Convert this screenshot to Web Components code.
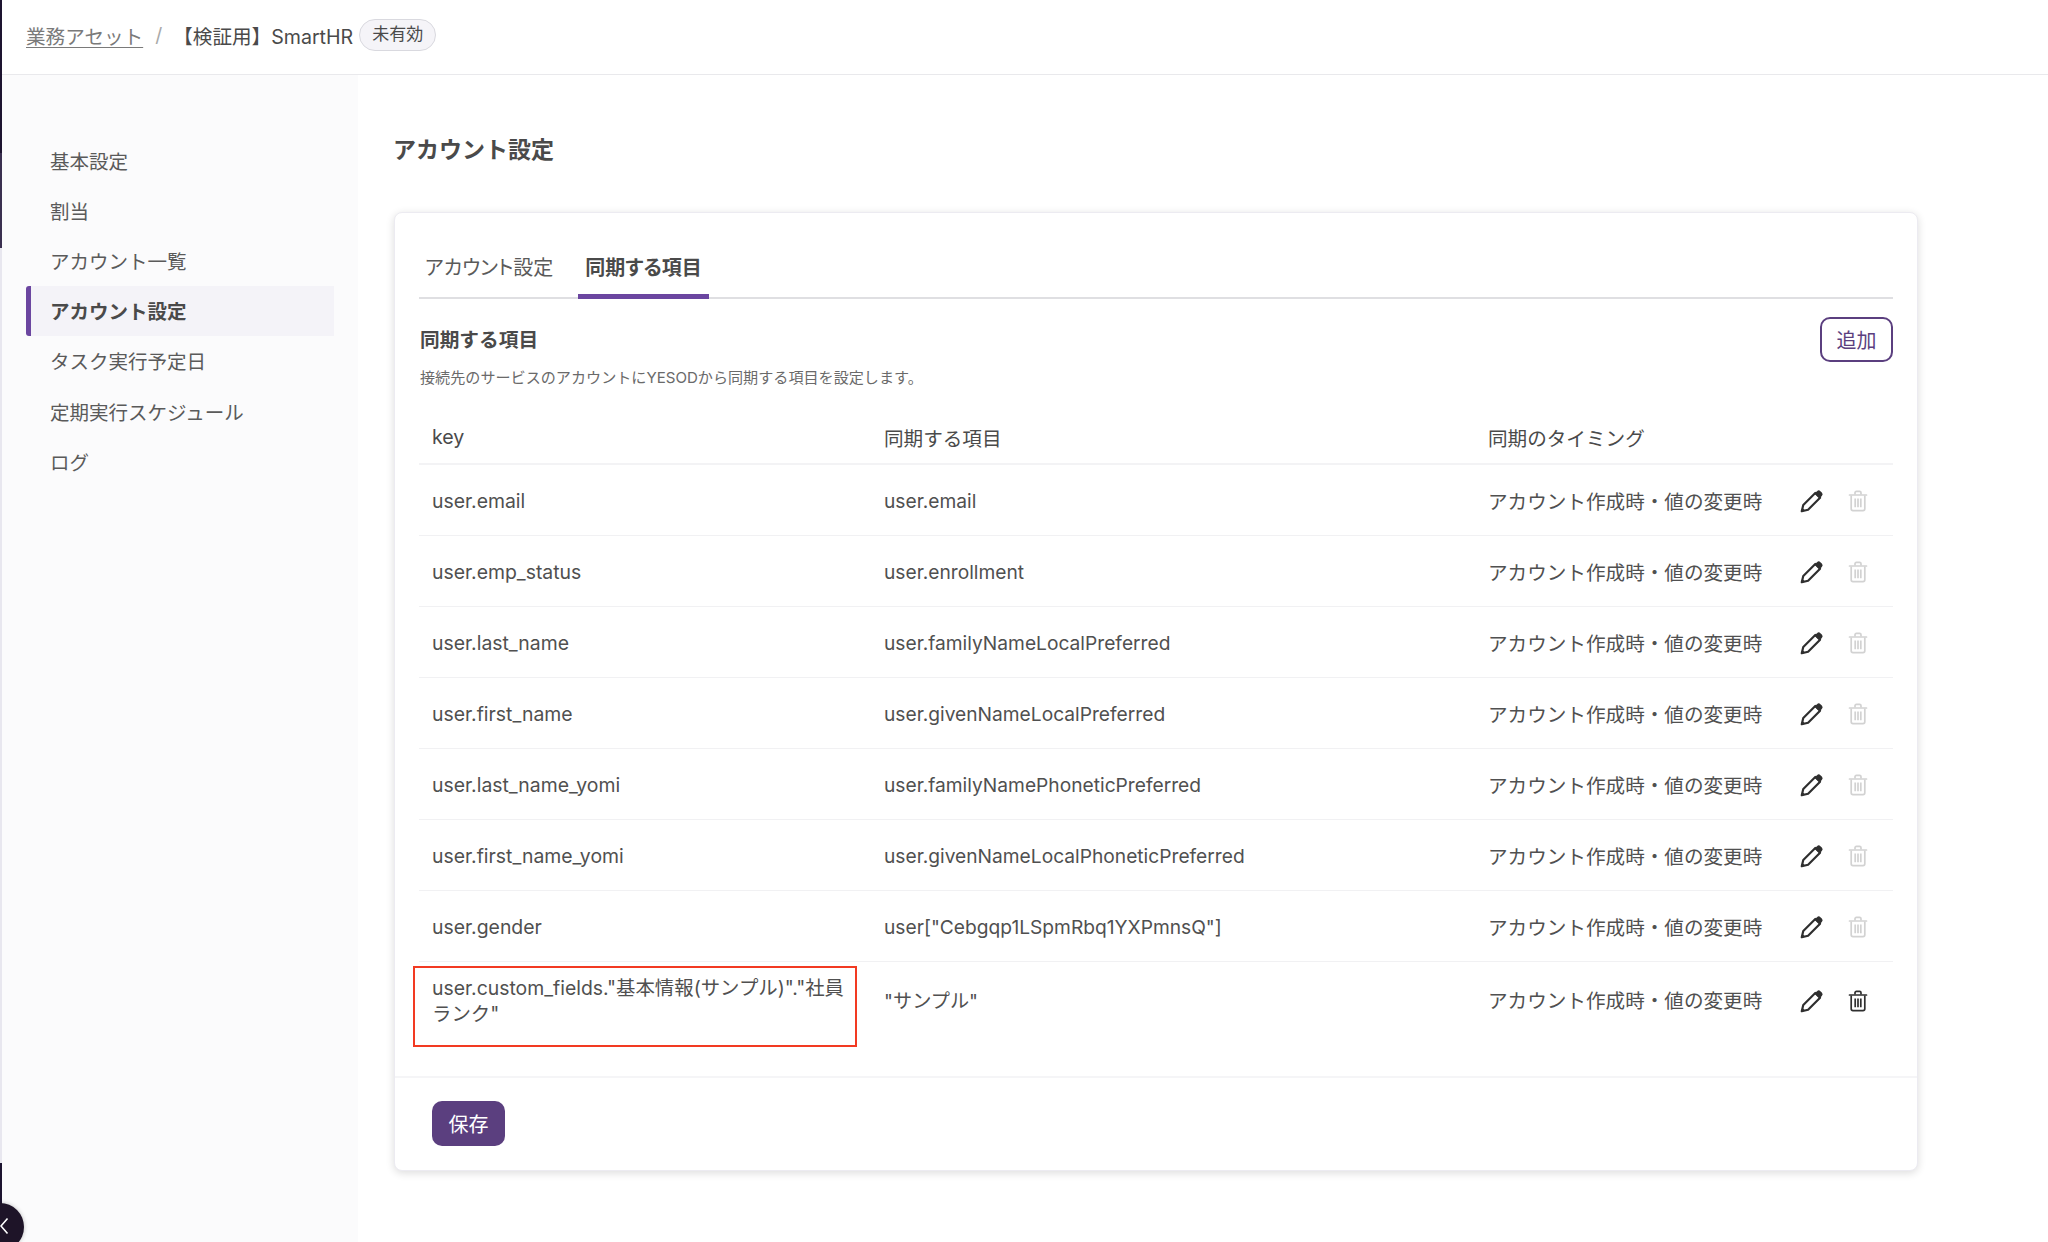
<!DOCTYPE html>
<html lang="ja">
<head>
<meta charset="utf-8">
<title>アカウント設定</title>
<style>
  html, body { margin: 0; height: 100%; background: #fff; overflow: hidden; }
  body {
    font-family: Inter, "Noto Sans CJK JP", sans-serif;
    color: #4a4a4a;
    font-size: 20px;
  }
</style>
</head>
<body>

<app-shell>
  <top-bar slot="top" parent="業務アセット" current="【検証用】SmartHR" status="未有効"></top-bar>
  <side-nav slot="side">
    <nav-item>基本設定</nav-item>
    <nav-item>割当</nav-item>
    <nav-item>アカウント一覧</nav-item>
    <nav-item active>アカウント設定</nav-item>
    <nav-item>タスク実行予定日</nav-item>
    <nav-item>定期実行スケジュール</nav-item>
    <nav-item>ログ</nav-item>
  </side-nav>
  <sync-page heading="アカウント設定">
    <tab-bar>
      <tab-item>アカウント設定</tab-item>
      <tab-item active>同期する項目</tab-item>
    </tab-bar>
    <sync-section heading="同期する項目" note="接続先のサービスのアカウントにYESODから同期する項目を設定します。">
      <sync-head></sync-head>
      <sync-row><span slot="key">user.email</span><span slot="item">user.email</span></sync-row>
      <sync-row><span slot="key">user.emp_status</span><span slot="item">user.enrollment</span></sync-row>
      <sync-row><span slot="key">user.last_name</span><span slot="item">user.familyNameLocalPreferred</span></sync-row>
      <sync-row><span slot="key">user.first_name</span><span slot="item">user.givenNameLocalPreferred</span></sync-row>
      <sync-row><span slot="key">user.last_name_yomi</span><span slot="item">user.familyNamePhoneticPreferred</span></sync-row>
      <sync-row><span slot="key">user.first_name_yomi</span><span slot="item">user.givenNameLocalPhoneticPreferred</span></sync-row>
      <sync-row><span slot="key">user.gender</span><span slot="item">user["Cebgqp1LSpmRbq1YXPmnsQ"]</span></sync-row>
      <sync-row tall removable><span slot="key">user.custom_fields."基本情報(サンプル)"."社員ランク"</span><span slot="item">"サンプル"</span></sync-row>
    </sync-section>
  </sync-page>
</app-shell>

<script>
const PENCIL = `<svg width="24" height="24" viewBox="1 1 22 22" fill="none">
  <path d="M2.600 21.400l1.400-5.800L15 4.600l4.400 4.400L8.400 20z" stroke="currentColor" stroke-width="2" stroke-linejoin="round"/>
  <path d="M2.200 21.800l.9-3.700 2.800 2.800z" fill="currentColor"/>
  <path d="M14.400 5.200l2.200-2.200a2.200 2.200 0 0 1 3.100 0l1.300 1.300a2.200 2.200 0 0 1 0 3.100L18.800 9.600z" fill="currentColor"/>
</svg>`;
const TRASH = `<svg width="20" height="22" viewBox="0 0 20 22" fill="none" stroke="currentColor" stroke-width="1.7">
  <path d="M1.500 5h17" stroke-linecap="round"/>
  <path d="M7 4.600V2.800c0-.8.6-1.400 1.400-1.400h3.200c.8 0 1.400.6 1.400 1.400v1.800"/>
  <path d="M3.200 5.400v13.400c0 1 .8 1.800 1.800 1.800h10c1 0 1.800-.8 1.800-1.800V5.400"/>
  <path d="M7.200 8.600v8.600M10 8.600v8.600M12.800 8.600v8.600"/>
</svg>`;

class AppShell extends HTMLElement {
  constructor() {
    super();
    this.attachShadow({mode: 'open'}).innerHTML = `
      <style>
        :host { display: flex; height: 1242px; position: relative; overflow: hidden; }
        .edge {
          width: 2px; flex: none;
          background: linear-gradient(#1d1430 0 153px, #3a3050 153px 248px, #e8e7ef 248px 1163px, #1d1430 1163px);
        }
        .body { flex: 1; min-width: 0; display: flex; flex-direction: column; }
        .below { flex: 1; min-height: 0; display: flex; }
        .toggle {
          position: absolute; left: -24px; top: 1203px;
          width: 48px; height: 48px; border-radius: 50%;
          background: #1e1428;
          box-shadow: 0 0 4px rgba(0,0,0,.25);
        }
        .toggle svg { position: absolute; left: 24px; top: 13px; }
      </style>
      <div class="edge"></div>
      <div class="body">
        <slot name="top"></slot>
        <div class="below">
          <slot name="side"></slot>
          <slot></slot>
        </div>
      </div>
      <div class="toggle">
        <svg width="10" height="20" viewBox="0 0 10 20" fill="none" stroke="#fff" stroke-width="1.6"><path d="M7.500 2.500L1 10l6.500 7.500"/></svg>
      </div>`;
  }
}

class TopBar extends HTMLElement {
  constructor() {
    super();
    this.attachShadow({mode: 'open'}).innerHTML = `
      <style>
        :host {
          display: flex; align-items: center; flex: none;
          height: 75px; box-sizing: border-box;
          padding: 0 0 4px 24px;
          border-bottom: 1px solid #e9e9ec;
          background: #fff;
          font-size: 19.6px;
        }
        a { color: #7a7a7a; text-decoration: underline; text-underline-offset: 3px; text-decoration-thickness: 1px; }
        .sep { color: #a9a9a9; margin: 0 11px 0 12px; }
        .cur { color: #4a4a4a; }
        .badge {
          margin-left: 6px; padding: 0 12px; height: 32px; line-height: 29px;
          box-sizing: border-box;
          border: 1px solid #d9d9df; border-radius: 16px;
          background: #f5f4f8; font-size: 17px; color: #4a4a4a;
        }
      </style>
      <a href="#">${this.getAttribute('parent')}</a>
      <span class="sep">/</span>
      <span class="cur">${this.getAttribute('current')}</span>
      <span class="badge">${this.getAttribute('status')}</span>`;
  }
}

class SideNav extends HTMLElement {
  constructor() {
    super();
    this.attachShadow({mode: 'open'}).innerHTML = `
      <style>
        :host {
          display: flex; flex-direction: column; flex: none;
          width: 356px; box-sizing: border-box;
          padding: 60px 24px 0 24px;
          background: #fbfbfc;
          font-size: 19.5px;
        }
      </style>
      <slot></slot>`;
  }
}

class NavItem extends HTMLElement {
  constructor() {
    super();
    this.attachShadow({mode: 'open'}).innerHTML = `
      <style>
        :host {
          display: flex; align-items: center;
          height: 50.2px; box-sizing: border-box;
          padding-left: 24px; color: #5a5a5a;
        }
        :host([active]) {
          background: #f4f3f8;
          border-left: 5px solid #6b46a0;
          border-radius: 3px 0 0 3px;
          padding-left: 19px;
          font-weight: 700; color: #4a4a4a;
        }
      </style>
      <slot></slot>`;
  }
}

class SyncPage extends HTMLElement {
  constructor() {
    super();
    this.attachShadow({mode: 'open'}).innerHTML = `
      <style>
        :host { display: block; flex: 1; min-width: 0; padding: 0 130px 0 36px; }
        h1 { margin: 0 0 0 -1px; height: 137px; box-sizing: border-box; padding-top: 58px; font-size: 23px; line-height: 34px; font-weight: 700; color: #4a4a4a; }
        .card {
          height: 959px; box-sizing: border-box;
          padding: 24px 24px 0 24px;
          border: 1px solid #ecebf1; border-radius: 8px;
          background: #fff;
          box-shadow: 0 2px 8px rgba(0,0,0,.14);
        }
      </style>
      <h1>${this.getAttribute('heading')}</h1>
      <div class="card"><slot></slot></div>`;
  }
}

class TabBar extends HTMLElement {
  constructor() {
    super();
    this.attachShadow({mode: 'open'}).innerHTML = `
      <style>
        :host { display: flex; height: 62px; box-sizing: border-box; border-bottom: 2px solid #dfdfe2; }
      </style>
      <slot></slot>`;
  }
}

class TabItem extends HTMLElement {
  constructor() {
    super();
    this.attachShadow({mode: 'open'}).innerHTML = `
      <style>
        :host {
          display: flex; align-items: center; height: 60px;
          padding: 0 8px 2px 6px; margin-right: 17px; box-sizing: border-box;
          color: #5a5a5a; font-feature-settings: "palt";
        }
        :host([active]) {
          font-weight: 700; color: #4a4a4a;
          padding: 2px 7px 0 7px; height: 62px;
          border-bottom: 5px solid #6b46a0;
          border-radius: 3px 3px 0 0;
        }
      </style>
      <slot></slot>`;
  }
}

class SyncSection extends HTMLElement {
  constructor() {
    super();
    this.attachShadow({mode: 'open'}).innerHTML = `
      <style>
        :host { display: block; }
        .head { display: flex; justify-content: space-between; align-items: flex-start; height: 114px; box-sizing: border-box; padding-top: 18px; }
        h2 { margin: 9px 0 0 1px; font-size: 19.7px; line-height: 28px; font-weight: 700; color: #4a4a4a; }
        p { margin: 14px 0 0 1px; font-size: 15.1px; line-height: 20px; color: #6a6a6a; }
        button {
          font: inherit; box-sizing: border-box; width: 73px; height: 45px;
          border-radius: 10px; cursor: pointer;
          background: #fff; border: 2px solid #5b3f7f; color: #5b3f7f;
        }
        .foot { margin: 0 -24px; padding: 23px 0 0 37px; border-top: 2px solid #f5f5f7; }
        button.save { background: #5b3f7f; border: 0; color: #fff; }
      </style>
      <div class="head">
        <div>
          <h2>${this.getAttribute('heading')}</h2>
          <p>${this.getAttribute('note')}</p>
        </div>
        <button>追加</button>
      </div>
      <slot></slot>
      <div class="foot"><button class="save">保存</button></div>`;
  }
}

const COLS = 'display: grid; grid-template-columns: 452px 604px 1fr;';

class SyncHead extends HTMLElement {
  constructor() {
    super();
    this.attachShadow({mode: 'open'}).innerHTML = `
      <style>
        :host { ${COLS} align-items: center; height: 52px; box-sizing: border-box; padding: 0 0 2px 13px; border-bottom: 2px solid #f3f3f5; color: #4a4a4a; font-size: 19.6px; }
        div:first-child { padding-top: 2px; }
      </style>
      <div>key</div><div>同期する項目</div><div>同期のタイミング</div>`;
  }
}

class SyncRow extends HTMLElement {
  constructor() {
    super();
    const removable = this.hasAttribute('removable');
    this.attachShadow({mode: 'open'}).innerHTML = `
      <style>
        :host {
          ${COLS} align-items: center; position: relative;
          height: 71px; box-sizing: border-box;
          padding-left: 13px;
          border-bottom: 1px solid #f1f1f3;
          color: #505050; font-size: 19.2px;
        }
        :host([tall]) { height: 114px; border-bottom: 0; align-items: start; padding-top: 13px; }
        .key { padding: 2px 27px 0 0; line-height: 26px; font-size: 19.4px; }
        .item { padding-top: 2px; }
        :host([tall]) .key { padding-top: 0; }
        :host([tall]) .item { padding-top: 11px; }
        :host([tall]) .timing { padding-top: 10px; }
        .timing { display: flex; align-items: center; font-size: 19.6px; }
        .acts { display: flex; align-items: center; margin-left: 38px; }
        .edit { color: #2f2f2f; width: 24px; height: 24px; margin-top: 2px; }
        .del { color: ${removable ? '#2f2f2f' : '#d2d2d2'}; width: 20px; height: 22px; margin-left: 24px; margin-top: 2px; }
        .mark { display: none; position: absolute; left: -6px; top: 4px; width: 444px; height: 81px; box-sizing: border-box; border: 2px solid #f23a22; pointer-events: none; }
        :host([tall]) .mark { display: block; }
      </style>
      <div class="key"><slot name="key"></slot></div>
      <div class="item"><slot name="item"></slot></div>
      <div class="timing"><span>アカウント作成時・値の変更時</span>
        <div class="acts"><div class="edit">${PENCIL}</div><div class="del">${TRASH}</div></div>
      </div>
      <div class="mark"></div>`;
  }
}

customElements.define('app-shell', AppShell);
customElements.define('top-bar', TopBar);
customElements.define('side-nav', SideNav);
customElements.define('nav-item', NavItem);
customElements.define('sync-page', SyncPage);
customElements.define('tab-bar', TabBar);
customElements.define('tab-item', TabItem);
customElements.define('sync-section', SyncSection);
customElements.define('sync-head', SyncHead);
customElements.define('sync-row', SyncRow);
</script>
</body>
</html>
